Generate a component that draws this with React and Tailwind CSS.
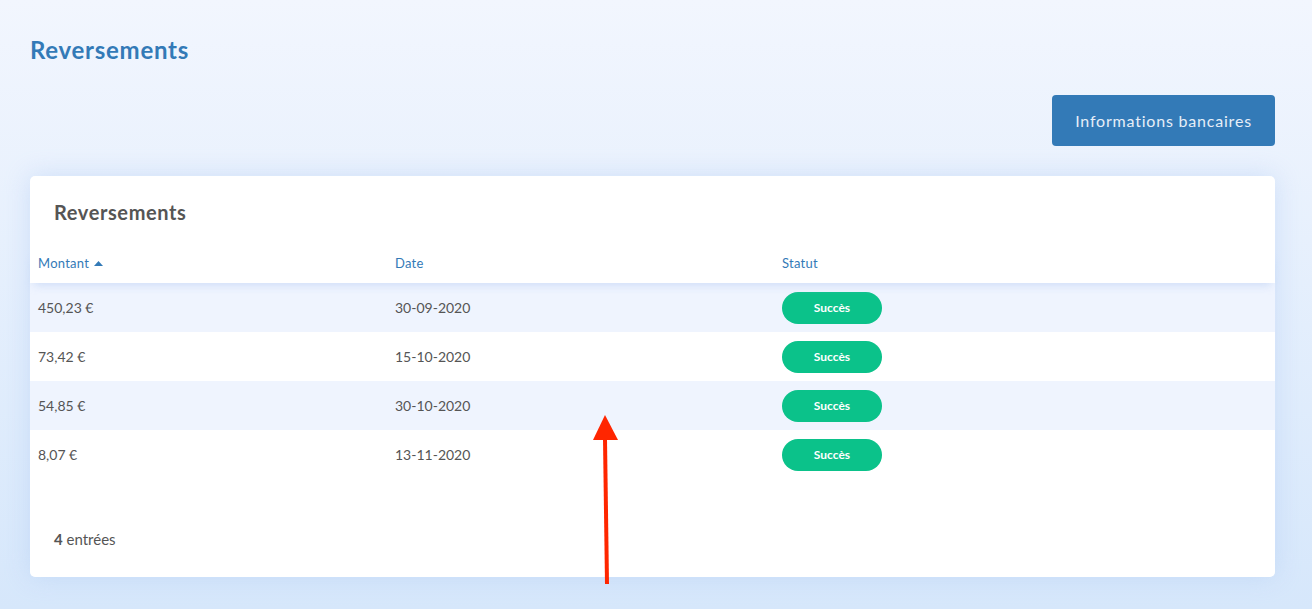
import React from "react";

const rows = [
  { m: "450,23 €", d: "30-09-2020" },
  { m: "73,42 €", d: "15-10-2020" },
  { m: "54,85 €", d: "30-10-2020" },
  { m: "8,07 €", d: "13-11-2020" },
];

export default function App() {
  return (
    <div
      className="relative w-[1312px] h-[609px] overflow-hidden bg-gradient-to-b from-[#f2f6fe] to-[#d6e7fb] pl-[30px] pr-[37px] pt-[35px]"
      style={{ fontFamily: "Lato, 'Noto Sans', sans-serif" }}
    >
      <h1 className="text-[24px] font-bold text-[#337ab7] leading-[30px] tracking-[0.03em]">Reversements</h1>
      <div className="flex justify-end mt-[30px]">
        <button className="w-[223px] h-[51px] rounded-[4px] bg-[#337ab7] text-[#e6eef8] text-[16px] tracking-[0.05em]">
          Informations bancaires
        </button>
      </div>
      <div className="mt-[30px] bg-white rounded-[5px] shadow-[0_0_24px_rgba(170,200,245,0.45)] h-[401px] flex flex-col">
        <h2 className="text-[20px] font-bold text-[#555] pl-[24px] pt-[22px] leading-[28px] tracking-[0.03em]">Reversements</h2>
        <div className="mt-[25px] relative z-10 flex items-start h-[32px] pt-[3px] text-[13px] text-[#337ab7] shadow-[0_6px_10px_-4px_rgba(190,210,245,0.7)]">
          <div className="w-[365px] pl-[8px] flex items-center gap-[5px] tracking-[0.02em]">
            Montant
            <svg width="9" height="5" viewBox="0 0 9 5"><path d="M0 5 L4.5 0 L9 5 Z" fill="#337ab7" /></svg>
          </div>
          <div className="w-[387px] tracking-[0.02em]">Date</div>
          <div className="tracking-[0.02em]">Statut</div>
        </div>
        <div className="flex flex-col">
          {rows.map((r, i) => (
            <div
              key={i}
              className={`flex items-center h-[49px] text-[14px] text-[#555] ${i % 2 === 0 ? "bg-[#eff4fe]" : "bg-white"}`}
            >
              <div className="w-[365px] pl-[8px]">{r.m}</div>
              <div className="w-[387px]">{r.d}</div>
              <div>
                <span className="inline-flex items-center justify-center w-[100px] h-[32px] rounded-full bg-[#0bc28a] text-white text-[12px] font-bold">
                  Succès
                </span>
              </div>
            </div>
          ))}
        </div>
        <div className="mt-auto pl-[24px] pb-[27px] text-[15px] text-[#555]">
          <span className="font-bold">4</span> entrées
        </div>
      </div>
      <svg className="absolute left-[590px] top-[412px]" width="32" height="176" viewBox="0 0 32 176">
        <path d="M15 3 L28 28 L3 28 Z" fill="#ff2600" />
        <path d="M15 27 L17 172" stroke="#ff2600" strokeWidth="4" />
      </svg>
    </div>
  );
}
